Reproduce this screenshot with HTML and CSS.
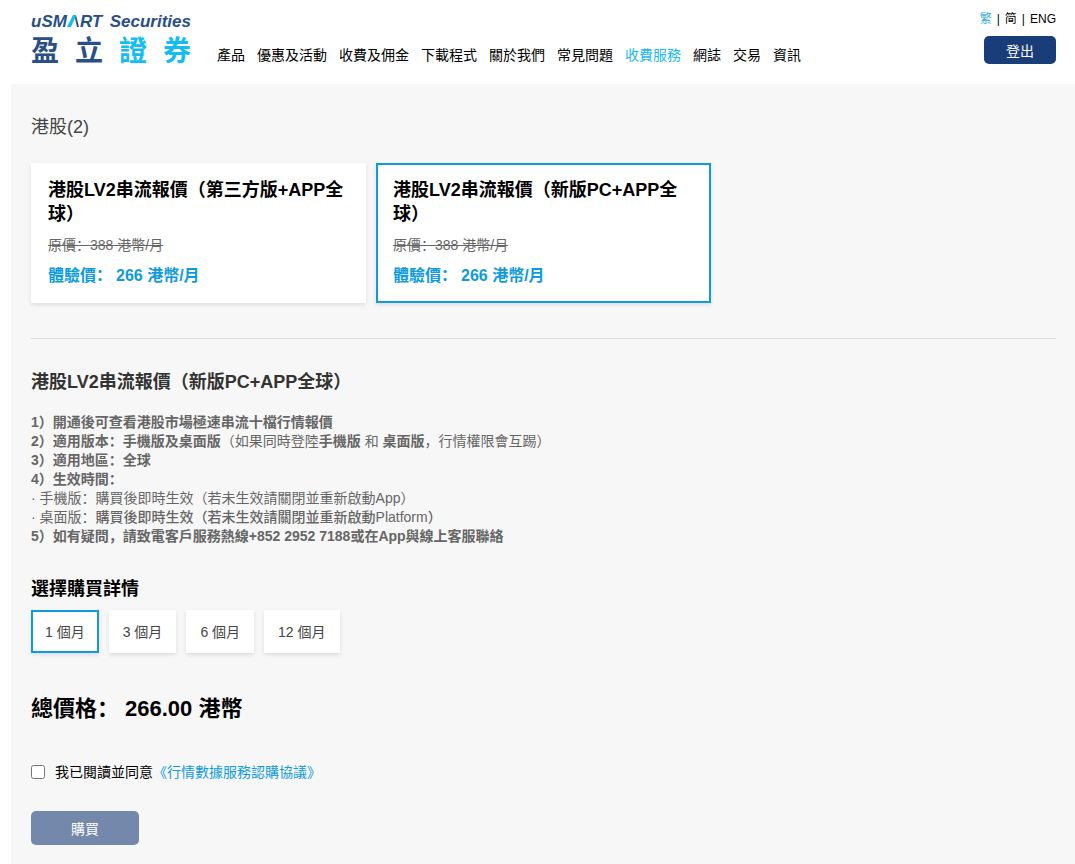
FILE: index.html
```html
<!DOCTYPE html>
<html lang="zh-CN">
<head>
    <meta charset="UTF-8">
    <meta name="viewport" content="width=device-width, initial-scale=1.0">
    <title>盈立證券 - 收費服務</title>
    <link rel="stylesheet" href="styles.css">
</head>
<body>
    <header class="header">
        <a href="#" class="logo">
            <span class="logo-en">
                <span>uSM<svg class="logo-mark" viewBox="0 0 13 12" aria-hidden="true">
                    <path fill="#12bdf2" d="M0 12 L6 0 H9 L8 3 L4 12 Z"/>
                    <path fill="#2a4f86" d="M8 3 L9 0 L12 12 H10 Z"/>
                </svg>RT</span>
                <span>Securities</span>
            </span>
            <span class="logo-zh">
                <span>盈</span><span>立</span><span class="light">證</span><span class="light">券</span>
            </span>
        </a>
        <nav class="nav">
            <a href="#">產品</a>
            <a href="#">優惠及活動</a>
            <a href="#">收費及佣金</a>
            <a href="#">下載程式</a>
            <a href="#">關於我們</a>
            <a href="#">常見問題</a>
            <a href="#" class="active">收費服務</a>
            <a href="#">網誌</a>
            <a href="#">交易</a>
            <a href="#">資訊</a>
        </nav>
        <div class="account">
            <div class="lang">
                <a href="#" class="active">繁</a><span>|</span><a href="#">简</a><span>|</span><a href="#">ENG</a>
            </div>
            <button type="button" class="btn btn-logout">登出</button>
        </div>
    </header>

    <main class="main">
        <h2 class="market">港股(2)</h2>
        <div class="cards">
            <div class="card">
                <h3>港股LV2串流報價（第三方版+APP全球）</h3>
                <del>原價：388 港幣/月</del>
                <p class="price">體驗價：<span>266 港幣/月</span></p>
            </div>
            <div class="card selected">
                <h3>港股LV2串流報價（新版PC+APP全球）</h3>
                <del>原價：388 港幣/月</del>
                <p class="price">體驗價：<span>266 港幣/月</span></p>
            </div>
        </div>

        <section class="detail">
            <h3>港股LV2串流報價（新版PC+APP全球）</h3>
            <div class="desc">
                <p><b>1）開通後可查看港股市場極速串流十檔行情報價</b></p>
                <p><b>2）適用版本：手機版及桌面版</b>（如果同時登陸<b>手機版</b> 和 <b>桌面版</b>，行情權限會互踢）</p>
                <p><b>3）適用地區：全球</b></p>
                <p><b>4）生效時間：</b></p>
                <p>· 手機版：購買後即時生效（若未生效請關閉並重新啟動App）</p>
                <p>· 桌面版：<span class="medium">購買後即時生效（若未生效請關閉並重新啟動Platform）</span></p>
                <p><b>5）如有疑問，請致電客戶服務熱線+852 2952 7188或在App與線上客服聯絡</b></p>
            </div>
        </section>

        <form>
            <h3 class="choose">選擇購買詳情</h3>
            <div class="periods">
                <button type="button" class="period selected">1 個月</button>
                <button type="button" class="period">3 個月</button>
                <button type="button" class="period">6 個月</button>
                <button type="button" class="period">12 個月</button>
            </div>
            <p class="total">總價格：<span>266.00 港幣</span></p>
            <div class="agree">
                <input type="checkbox" id="agree">
                <label for="agree">我已閱讀並同意</label><a href="#">《行情數據服務認購協議》</a>
            </div>
            <button type="submit" class="btn btn-buy" disabled>購買</button>
        </form>
    </main>
</body>
</html>
```

FILE: styles.css
```css
* {
    box-sizing: border-box;
}
body {
    display: flex;
    flex-direction: column;
    min-height: 100vh;
    margin: 0;
    padding-left: 11px;
    font-family: "Liberation Sans", "Noto Sans CJK SC", sans-serif;
    font-size: 14px;
    line-height: 20px;
    color: #000;
    background-color: #fff;
}
h2, h3, p {
    margin: 0;
}
a {
    color: inherit;
    text-decoration: none;
}
button {
    font-family: inherit;
    font-size: 14px;
    cursor: pointer;
}

/* header */
.header {
    display: flex;
    height: 84px;
    padding: 0 19px 0 20px;
}
.logo {
    width: 160px;
    padding-top: 12px;
    color: #2a4f86;
    font-weight: bold;
}
.logo-en {
    display: flex;
    justify-content: space-between;
    font-size: 17px;
    font-style: italic;
    line-height: 20px;
    white-space: nowrap;
}
.logo-mark {
    width: 13px;
    height: 12px;
}
.logo-zh {
    display: flex;
    justify-content: space-between;
    font-size: 28px;
    line-height: 40px;
}
.logo-zh .light {
    color: #12bdf2;
}
.nav {
    display: flex;
    gap: 12px;
    margin-left: 26px;
    padding-top: 45px;
    white-space: nowrap;
}
.nav .active {
    color: #1ab8f2;
}
.account {
    display: flex;
    flex-direction: column;
    align-items: flex-end;
    margin-left: auto;
}
.lang {
    display: flex;
    gap: 5px;
    padding-top: 9px;
    font-size: 12px;
}
.lang .active {
    color: #2fabdb;
}
.btn {
    padding: 0;
    border: none;
    border-radius: 5px;
    color: #fff;
    background-color: #193d78;
}
.btn-logout {
    width: 72px;
    height: 28px;
    margin-top: 7px;
}

/* product cards */
.main {
    flex: 1;
    padding: 31px 19px 19px 20px;
    background-color: #f7f7f7;
}
.market {
    font-size: 18px;
    font-weight: normal;
    line-height: 24px;
    color: #444;
}
.cards {
    display: flex;
    gap: 10px;
    margin-top: 24px;
}
.card {
    width: 335px;
    padding: 13px 15px 15px;
    border: 2px solid #fff;
    background-color: #fff;
    box-shadow: 0 2px 4px rgba(0,0,0,0.1);
}
.card h3, .detail h3, .choose {
    font-size: 18px;
    font-weight: bold;
    line-height: 24px;
}
.card del {
    display: block;
    margin-top: 9px;
    color: #666;
}
.price {
    margin-top: 11px;
    font-size: 16px;
    font-weight: bold;
    color: #0d9bdd;
}
.price span {
    margin-left: 4px;
}
.selected {
    border-color: #0d9bdd;
}

/* product detail */
.detail {
    margin-top: 35px;
    padding-top: 31px;
    border-top: 1px solid #ddd;
}
.detail h3 {
    color: #333;
}
.desc {
    margin-top: 19px;
    line-height: 19px;
    color: #666;
}
.desc .medium {
    font-weight: 500;
}

/* purchase form */
.choose {
    margin-top: 31px;
}
.periods {
    display: flex;
    gap: 10px;
    margin-top: 9px;
}
.period {
    height: 43px;
    padding: 0 12px 1px;
    border: 2px solid #fff;
    color: #444;
    background-color: #fff;
    box-shadow: 0 2px 4px rgba(0,0,0,0.1);
}
.period.selected {
    border-color: #0d9bdd;
}
.total {
    margin-top: 41px;
    font-size: 22px;
    font-weight: bold;
    line-height: 30px;
}
.total span {
    margin-left: 6px;
}
.agree {
    display: flex;
    align-items: center;
    margin-top: 38px;
}
.agree input {
    width: 14px;
    height: 14px;
    margin: 0 10px 0 0;
}
.agree a {
    color: #0d9bdd;
}
.btn-buy {
    display: block;
    width: 108px;
    height: 34px;
    margin-top: 29px;
    background-color: #7388ab;
}
```
